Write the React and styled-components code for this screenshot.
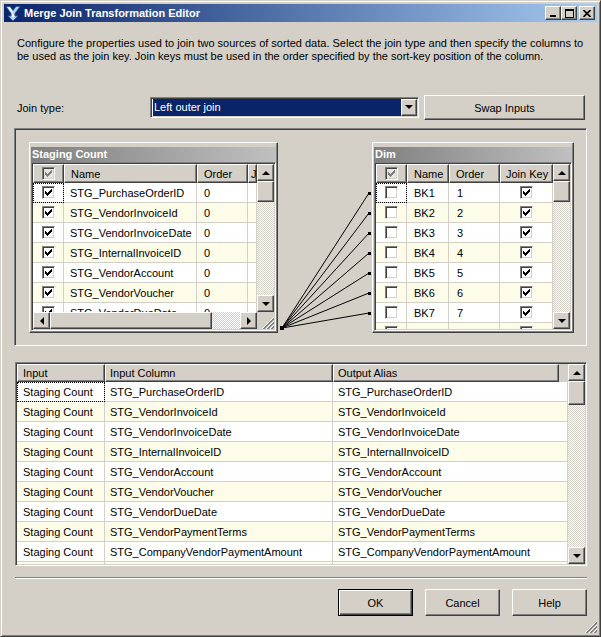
import styled, { createGlobalStyle, css } from 'styled-components'

const FACE = '#d4d0c8'
const SHADOW = '#808080'
const DARK = '#404040'
const LINE = '#d4d0c8'
const ALT = '#fcfce8'
const FONT = '"Liberation Sans", Arial, sans-serif'

const raised = css`
    border: 1px solid;
    border-color: #fff ${DARK} ${DARK} #fff;
    box-shadow: inset -1px -1px ${SHADOW}, inset 1px 1px ${FACE};
`
const sunken = css`
    border: 1px solid;
    border-color: ${SHADOW} #fff #fff ${SHADOW};
    box-shadow: inset 1px 1px ${DARK}, inset -1px -1px ${FACE};
`
const dither = css`
    background-color: #fff;
    background-image: conic-gradient(${FACE} 25%, #fff 0 50%, ${FACE} 0 75%, #fff 0);
    background-size: 2px 2px;
`

const GlobalStyle = createGlobalStyle`
    * { box-sizing: border-box; }
    html, body { margin: 0; padding: 0; background: ${FACE}; }
    body { font-family: ${FONT}; font-size: 11px; color: #000; }
`

const Window = styled.div`
    position: relative;
    width: 601px;
    height: 637px;
    background: ${FACE};
    border: 1px solid;
    border-color: ${FACE} ${DARK} ${DARK} ${FACE};
    box-shadow: inset 1px 1px #fff, inset -1px -1px ${SHADOW};
    padding: 3px;
    display: flex;
    flex-direction: column;
`
const TitleBar = styled.div`
    height: 18px;
    flex: none;
    display: flex;
    align-items: center;
    padding: 0 2px 0 1px;
    background: linear-gradient(to right, #0a246a, #a6caf0);
`
const TitleText = styled.span`
    margin-left: 3px;
    color: #fff;
    font-weight: bold;
    font-size: 11px;
`
const CaptionGroup = styled.div`
    margin-left: auto;
    display: flex;
`
const CaptionButton = styled.div`
    width: 16px;
    height: 14px;
    margin-left: ${p => (p.$gap ? 2 : 0)}px;
    ${raised};
    background: ${FACE};
    display: flex;
    align-items: center;
    justify-content: center;
`
const Content = styled.div`
    flex: 1;
    display: flex;
    flex-direction: column;
    padding: 0 10px;
`
const Description = styled.p`
    margin: 15px 0 0;
    padding-left: 3px;
    line-height: 13px;
`
const JoinRow = styled.div`
    display: flex;
    align-items: center;
    height: 25px;
    margin-top: 32px;
    padding-left: 3px;
`
const Label = styled.span`
    width: 133px;
    flex: none;
`
const Combo = styled.div`
    width: 269px;
    height: 21px;
    flex: none;
    margin-top: -1px;
    ${sunken};
    background: #fff;
    padding: 1px;
    display: flex;
`
const ComboValue = styled.div`
    flex: 1;
    margin-left: 1px;
    background: #0a246a;
    color: #fff;
    padding-left: 1px;
    display: flex;
    align-items: center;
`
const ComboArrow = styled.div`
    width: 16px;
    flex: none;
    ${raised};
    background: ${FACE};
    display: flex;
    align-items: center;
    justify-content: center;
`
const PushButton = styled.div`
    width: ${p => p.$w}px;
    height: ${p => p.$h}px;
    flex: none;
    margin-left: ${p => p.$ml || 0}px;
    ${raised};
    background: ${FACE};
    display: flex;
    align-items: center;
    justify-content: center;
    ${p => p.$primary && css`
        border-color: #000;
        box-shadow: inset 1px 1px #fff, inset -1px -1px ${DARK}, inset -2px -2px ${SHADOW};
    `}
`
const Surface = styled.div`
    position: relative;
    height: 218px;
    margin-top: 8px;
    flex: none;
    ${sunken};
    display: flex;
    justify-content: space-between;
    align-items: flex-start;
    padding: 13px 12px 0 14px;
`
const Links = styled.svg`
    position: absolute;
    left: 0;
    top: 0;
    overflow: visible;
    pointer-events: none;
`
const InputBox = styled.div`
    position: relative;
    width: ${p => p.$w}px;
    height: 191px;
    flex: none;
    ${raised};
    background: ${FACE};
    padding: 1px;
    display: flex;
    flex-direction: column;
`
const BoxTitle = styled.div`
    height: 15px;
    margin-top: 3px;
    flex: none;
    padding-left: 1px;
    line-height: 15px;
    color: #fff;
    font-weight: bold;
    background: linear-gradient(to right, #808080, #c0c0c0);
`
const GridFrame = styled.div`
    flex: 1;
    min-height: 0;
    ${sunken};
    padding: 1px;
    display: flex;
    flex-direction: column;
    background: #fff;
`
const GridMain = styled.div`
    flex: 1;
    min-height: 0;
    display: flex;
`
const Columns = styled.div`
    flex: 1;
    min-width: 0;
    overflow: hidden;
    display: flex;
    flex-direction: column;
`
const HeadRow = styled.div`
    height: ${p => p.$h}px;
    flex: none;
    display: flex;
    background: ${FACE};
`
const HeadCell = styled.div`
    width: ${p => p.$w}px;
    flex: none;
    ${raised};
    background: ${FACE};
    padding-left: ${p => p.$pad}px;
    display: flex;
    align-items: center;
    justify-content: ${p => (p.$center ? 'center' : 'flex-start')};
    white-space: nowrap;
    overflow: hidden;
`
const Row = styled.div`
    height: 20px;
    flex: none;
    display: flex;
    background: ${p => (p.$alt ? ALT : '#fff')};
`
const Cell = styled.div`
    width: ${p => (p.$w ? `${p.$w}px` : 'auto')};
    flex: ${p => (p.$w ? 'none' : 1)};
    border-right: 1px solid ${LINE};
    border-bottom: 1px solid ${LINE};
    padding-left: ${p => p.$pad || 0}px;
    display: flex;
    align-items: center;
    justify-content: ${p => (p.$center ? 'center' : 'flex-start')};
    white-space: nowrap;
    overflow: hidden;
    ${p => p.$focus && css`
        outline: 1px dotted #000;
        outline-offset: -1px;
    `}
`
const Box = styled.span`
    width: 13px;
    height: 13px;
    flex: none;
    display: inline-flex;
    ${sunken};
    padding: 1px;
    background: ${p => (p.$disabled ? '#e8e6e2' : '#fff')};
`
const VScroll = styled.div`
    width: 17px;
    flex: none;
    display: flex;
    flex-direction: column;
`
const HScrollRow = styled.div`
    height: 17px;
    flex: none;
    display: flex;
`
const HScroll = styled.div`
    flex: 1;
    display: flex;
`
const ScrollButton = styled.div`
    width: 17px;
    height: 17px;
    flex: none;
    ${raised};
    background: ${FACE};
    display: flex;
    align-items: center;
    justify-content: center;
`
const Thumb = styled.div`
    flex: none;
    ${raised};
    background: ${FACE};
`
const Track = styled.div`
    flex: 1;
    ${dither};
`
const Grip = styled.div`
    width: 17px;
    flex: none;
    background: ${FACE};
    display: flex;
    align-items: flex-end;
    justify-content: flex-end;
`
const Arrow = styled.span`
    width: 0;
    height: 0;
    border: 4px solid transparent;
    ${p => p.$dir === 'up' && css`border-top: 0; border-bottom-color: #000;`}
    ${p => p.$dir === 'down' && css`border-bottom: 0; border-top-color: #000;`}
    ${p => p.$dir === 'left' && css`border-left: 0; border-right-color: #000;`}
    ${p => p.$dir === 'right' && css`border-right: 0; border-left-color: #000;`}
`
const MappingGrid = styled.div`
    height: 204px;
    flex: none;
    margin: 16px 0 0 1px;
    ${sunken};
    padding: 1px;
    display: flex;
    background: #fff;
`
const Separator = styled.div`
    height: 2px;
    flex: none;
    margin: 11px 0 0 1px;
    border-top: 1px solid ${SHADOW};
    border-bottom: 1px solid #fff;
`
const ButtonRow = styled.div`
    display: flex;
    justify-content: flex-end;
    gap: 12px;
    margin-top: 10px;
`
const WindowGrip = styled.svg`
    position: absolute;
    right: 3px;
    bottom: 3px;
`

const CheckMark = ({ color = '#000' }) => (
    <svg width="9" height="9" viewBox="0 0 9 9" shapeRendering="crispEdges">
        <g fill={color}>
            <rect x="7" y="1" width="1" height="1" />
            <rect x="6" y="2" width="2" height="1" />
            <rect x="1" y="3" width="1" height="1" />
            <rect x="5" y="3" width="3" height="1" />
            <rect x="1" y="4" width="2" height="1" />
            <rect x="4" y="4" width="3" height="1" />
            <rect x="1" y="5" width="5" height="1" />
            <rect x="2" y="6" width="3" height="1" />
            <rect x="3" y="7" width="1" height="1" />
        </g>
    </svg>
)

const CheckBox = ({ checked, disabled }) => (
    <Box $disabled={disabled}>
        {checked && <CheckMark color={disabled ? SHADOW : '#000'} />}
    </Box>
)

const GripLines = ({ size = 12 }) => (
    <svg width={size} height={size} viewBox="0 0 12 12" shapeRendering="crispEdges">
        {[0, 4, 8].map(o => (
            <g key={o}>
                <line x1={12} y1={o} x2={o} y2={12} stroke="#fff" />
                <line x1={12} y1={o + 1} x2={o + 1} y2={12} stroke={SHADOW} />
                <line x1={12} y1={o + 2} x2={o + 2} y2={12} stroke={SHADOW} />
            </g>
        ))}
    </svg>
)

const VBar = ({ thumb }) => (
    <VScroll>
        <ScrollButton><Arrow $dir="up" /></ScrollButton>
        <Thumb style={{ height: thumb }} />
        <Track />
        <ScrollButton><Arrow $dir="down" /></ScrollButton>
    </VScroll>
)

const stagingRows = [
    'STG_PurchaseOrderID',
    'STG_VendorInvoiceId',
    'STG_VendorInvoiceDate',
    'STG_InternalInvoiceID',
    'STG_VendorAccount',
    'STG_VendorVoucher',
    'STG_VendorDueDate',
]

const mappingRows = [
    'STG_PurchaseOrderID',
    'STG_VendorInvoiceId',
    'STG_VendorInvoiceDate',
    'STG_InternalInvoiceID',
    'STG_VendorAccount',
    'STG_VendorVoucher',
    'STG_VendorDueDate',
    'STG_VendorPaymentTerms',
    'STG_CompanyVendorPaymentAmount',
    'STG_CompanyVendorTaxAmount',
]

const dimRows = [1, 2, 3, 4, 5, 6, 7, 8]

const App = () => {
    return (
        <>
            <GlobalStyle />
            <Window>
                <TitleBar>
                    <svg width="16" height="17" viewBox="0 0 16 17">
                        <path d="M1 1.5 L5 1.5 L8 5.5 L11 1.5 L15 1.5 L10 8.5 L10 11 L13 11 L8 16 L3 11 L6 11 L6 8.5 Z" fill="#b8d0f0" stroke="#2c5a9a" />
                        <path d="M3 2.5 L5 2.5 L8 7 L7.5 9 Z" fill="#fff" />
                        <rect x="7" y="9" width="2" height="3" fill="#fff" />
                    </svg>
                    <TitleText>Merge Join Transformation Editor</TitleText>
                    <CaptionGroup>
                        <CaptionButton>
                            <svg width="8" height="8" viewBox="0 0 8 8" shapeRendering="crispEdges">
                                <rect x="1" y="6" width="6" height="2" fill="#000" />
                            </svg>
                        </CaptionButton>
                        <CaptionButton>
                            <svg width="9" height="9" viewBox="0 0 9 9" shapeRendering="crispEdges">
                                <rect x="0.5" y="0.5" width="8" height="8" fill="none" stroke="#000" />
                                <rect x="0" y="1" width="9" height="1" fill="#000" />
                            </svg>
                        </CaptionButton>
                        <CaptionButton $gap>
                            <svg width="8" height="7" viewBox="0 0 8 7">
                                <path d="M0.5 0 L7.5 7 M7.5 0 L0.5 7" stroke="#000" strokeWidth="1.6" />
                            </svg>
                        </CaptionButton>
                    </CaptionGroup>
                </TitleBar>

                <Content>
                    <Description>
                        Configure the properties used to join two sources of sorted data. Select the join type and then specify the columns to be used as the join key. Join keys must be used in the order specified by the sort-key position of the column.
                    </Description>

                    <JoinRow>
                        <Label>Join type:</Label>
                        <Combo>
                            <ComboValue>Left outer join</ComboValue>
                            <ComboArrow><Arrow $dir="down" /></ComboArrow>
                        </Combo>
                        <PushButton $w={161} $h={25} $ml={5}>Swap Inputs</PushButton>
                    </JoinRow>

                    <Surface>
                        <Links width="1" height="1">
                            {dimRows.slice(0, 7).map((r, i) => (
                                <g key={r}>
                                    <line x1={267} y1={199} x2={354} y2={64 + i * 20} stroke="#000" />
                                    <rect x={353} y={63 + i * 20} width="3" height="3" fill="#000" />
                                </g>
                            ))}
                            <rect x={265} y={197} width="4" height="4" fill="#000" />
                        </Links>

                        <InputBox $w={249}>
                            <BoxTitle>Staging Count</BoxTitle>
                            <GridFrame>
                                <GridMain>
                                    <Columns>
                                        <HeadRow $h={19}>
                                            <HeadCell $w={31} $center><CheckBox checked disabled /></HeadCell>
                                            <HeadCell $w={133} $pad={6}>Name</HeadCell>
                                            <HeadCell $w={51} $pad={6}>Order</HeadCell>
                                            <HeadCell $w={9} $pad={2}>Join Key</HeadCell>
                                        </HeadRow>
                                        {stagingRows.map((name, i) => (
                                            <Row key={name} $alt={i % 2 === 1}>
                                                <Cell $w={31} $center $focus={i === 0}><CheckBox checked /></Cell>
                                                <Cell $w={133} $pad={6}>{name}</Cell>
                                                <Cell $w={51} $pad={7}>0</Cell>
                                                <Cell $w={9} />
                                            </Row>
                                        ))}
                                    </Columns>
                                    <VBar thumb={21} />
                                </GridMain>
                                <HScrollRow>
                                    <HScroll>
                                        <ScrollButton><Arrow $dir="left" /></ScrollButton>
                                        <Thumb style={{ width: 162 }} />
                                        <Track />
                                        <ScrollButton><Arrow $dir="right" /></ScrollButton>
                                    </HScroll>
                                    <Grip><GripLines size={12} /></Grip>
                                </HScrollRow>
                            </GridFrame>
                        </InputBox>

                        <InputBox $w={202}>
                            <BoxTitle>Dim</BoxTitle>
                            <GridFrame>
                                <GridMain>
                                    <Columns>
                                        <HeadRow $h={19}>
                                            <HeadCell $w={31} $center><CheckBox checked disabled /></HeadCell>
                                            <HeadCell $w={42} $pad={6}>Name</HeadCell>
                                            <HeadCell $w={51} $pad={6}>Order</HeadCell>
                                            <HeadCell $w={53} $pad={5}>Join Key</HeadCell>
                                        </HeadRow>
                                        {dimRows.map((n, i) => (
                                            <Row key={n} $alt={i % 2 === 1}>
                                                <Cell $w={31} $center $focus={i === 0}><CheckBox /></Cell>
                                                <Cell $w={42} $pad={7}>BK{n}</Cell>
                                                <Cell $w={51} $pad={8}>{n}</Cell>
                                                <Cell $w={53} $center><CheckBox checked /></Cell>
                                            </Row>
                                        ))}
                                    </Columns>
                                    <VBar thumb={21} />
                                </GridMain>
                            </GridFrame>
                        </InputBox>
                    </Surface>

                    <MappingGrid>
                        <Columns>
                            <HeadRow $h={18}>
                                <HeadCell $w={88} $pad={5}>Input</HeadCell>
                                <HeadCell $w={228} $pad={4}>Input Column</HeadCell>
                                <HeadCell $w={226} $pad={4}>Output Alias</HeadCell>
                            </HeadRow>
                            {mappingRows.map((name, i) => (
                                <Row key={name} $alt={i % 2 === 1}>
                                    <Cell $w={88} $pad={6} $focus={i === 0}>Staging Count</Cell>
                                    <Cell $w={228} $pad={5}>{name}</Cell>
                                    <Cell $pad={5}>{name}</Cell>
                                </Row>
                            ))}
                        </Columns>
                        <VBar thumb={24} />
                    </MappingGrid>

                    <Separator />

                    <ButtonRow>
                        <PushButton $w={75} $h={27} $primary>OK</PushButton>
                        <PushButton $w={75} $h={27}>Cancel</PushButton>
                        <PushButton $w={75} $h={27}>Help</PushButton>
                    </ButtonRow>
                </Content>

                <WindowGrip width="12" height="12" viewBox="0 0 12 12">
                    <GripLines size={12} />
                </WindowGrip>
            </Window>
        </>
    )
}

export default App
